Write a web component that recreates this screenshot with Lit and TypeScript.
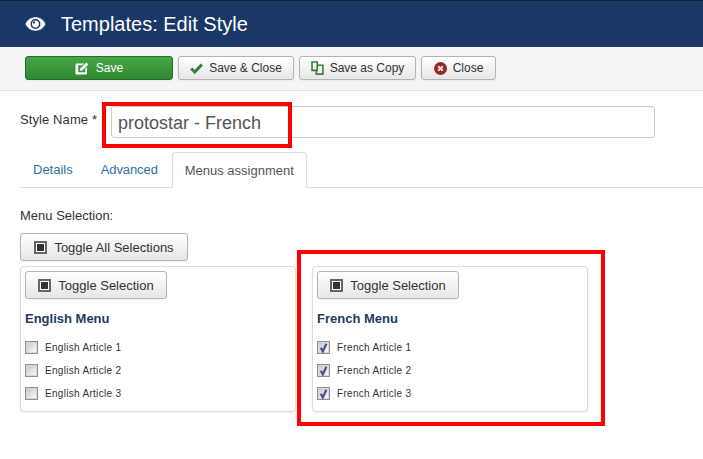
import { LitElement, html, css, svg } from "lit";
import { customElement } from "lit/decorators.js";

const eye = html`<svg class="eye" viewBox="0 0 22 14" width="21" height="14"><path fill="#fff" fill-rule="evenodd" d="M11 0C6.400 0 2.600 2.600.5 7c2.100 4.400 5.900 7 10.500 7s8.400-2.600 10.500-7C19.400 2.600 15.600 0 11 0zm0 1.800a5.200 5.200 0 1 1 0 10.400 5.200 5.200 0 0 1 0-10.400z"/><circle cx="11" cy="7" r="3.600" fill="#fff"/><circle cx="9.500" cy="5.500" r="1.200" fill="#1a3867"/></svg>`;
const editIcon = html`<svg class="ic" viewBox="0 0 14 13" width="14" height="13"><path fill="#fff" d="M1.500 1.500H9L7.200 3.300H3.200v7h7V7l1.800-1.800v6.300a1 1 0 0 1-1 1H1.500a1 1 0 0 1-1-1v-9a1 1 0 0 1 1-1z"/><path fill="#fff" d="M11.300.5l2 2-6 6-2.600.600.600-2.600z"/></svg>`;
const checkIcon = html`<svg class="ic" viewBox="0 0 13 11" width="13" height="11"><path fill="none" stroke="#378137" stroke-width="3" d="M1.200 5.500l3.600 3.500 7-7.500"/></svg>`;
const copyIcon = html`<svg class="ic" viewBox="0 0 13 14" width="13" height="14"><path fill="none" stroke="#378137" stroke-width="1.600" d="M1 1h5.200v8.400H1zM6.200 4.300h2.300l3.400 0v8.800H5.300V9.400"/></svg>`;
const closeIcon = html`<svg class="ic" viewBox="0 0 13 13" width="13" height="13"><circle cx="6.500" cy="6.500" r="6.500" fill="#942a25"/><path stroke="#f3dcdc" stroke-width="2" d="M4.200 4.200l4.600 4.600M8.800 4.200l-4.600 4.600"/></svg>`;
const toggleIcon = html`<span class="toggle"><span></span></span>`;
const tick = svg`<path fill="none" stroke="#3f539c" stroke-width="2.200" d="M3.800 6.800l2 3.600 3.600-7.600"/>`;

const menus = [
  { title: "English Menu", prefix: "English", checked: false },
  { title: "French Menu", prefix: "French", checked: true },
];

@customElement("app-root")
export class AppRoot extends LitElement {
  static styles = css`
    :host {
      display: block;
      position: relative;
      width: 703px;
      height: 459px;
      overflow: hidden;
      background: #fff;
      font-family: "Liberation Sans", Arial, sans-serif;
      font-size: 13px;
      color: #333;
    }
    .head {
      box-sizing: border-box;
      height: 47px;
      border-top: 1px solid #0f2140;
      background: #1a3867;
      display: flex;
      align-items: center;
      padding-left: 25px;
      gap: 15px;
      color: #fff;
      font-size: 20px;
    }
    .eye { display: block; }
    .toolbar {
      box-sizing: border-box;
      height: 44px;
      background: #f5f5f5;
      border-bottom: 1px solid #e3e3e3;
      display: flex;
      gap: 5px;
      padding: 9px 0 0 25px;
    }
    .btn {
      box-sizing: border-box;
      height: 24px;
      display: flex;
      align-items: center;
      justify-content: center;
      gap: 6px;
      font: 12px "Liberation Sans", Arial, sans-serif;
      color: #333;
      border: 1px solid #b3b3b3;
      border-radius: 3px;
      background: linear-gradient(#fff, #e6e6e6);
      box-shadow: 0 1px 2px rgba(0, 0, 0, 0.05);
      padding: 0;
    }
    .ic { display: block; flex: none; }
    .save {
      width: 148px;
      color: #fff;
      gap: 7px;
      border-color: #2a6a2a;
      background: linear-gradient(#46a546, #2f8a2f);
    }
    .w116 { width: 116px; }
    .w117 { width: 117px; }
    .w75 { width: 75px; }
    .name {
      display: flex;
      align-items: flex-start;
      padding: 15px 0 0 20px;
    }
    .name label {
      width: 91px;
      font-size: 13px;
      letter-spacing: 0.1px;
      margin-top: 7px;
      line-height: 14px;
    }
    .name .input {
      box-sizing: border-box;
      width: 544px;
      height: 32px;
      border: 1px solid #ccc;
      border-radius: 3px;
      font-size: 18px;
      line-height: 32px;
      padding-left: 6px;
      color: #555;
    }
    .tabs {
      display: flex;
      align-items: flex-end;
      height: 36px;
      margin: 14px 0 0 20px;
      border-bottom: 1px solid #ddd;
      box-sizing: border-box;
    }
    .tab {
      color: #3071a9;
      padding: 0 15px 0 13px;
      line-height: 35px;
      height: 35px;
    }
    .tab.adv {
      padding-right: 14px;
      letter-spacing: -0.1px;
    }
    .tab.active {
      box-sizing: border-box;
      width: 135px;
      height: 36px;
      margin-bottom: -1px;
      padding: 0;
      text-align: center;
      color: #555;
      border: 1px solid #ddd;
      border-bottom-color: #fff;
      border-radius: 4px 4px 0 0;
      background: #fff;
    }
    .sel-label {
      margin: 21px 0 0 20px;
      line-height: 14px;
    }
    .toggle {
      box-sizing: border-box;
      width: 13px;
      height: 13px;
      border: 2px solid #666;
      background: #fff;
      display: flex;
      align-items: center;
      justify-content: center;
      flex: none;
    }
    .toggle span { width: 7px; height: 7px; background: #333; display: block; }
    .tbtn {
      height: 28px;
      font-size: 13px;
      gap: 7px;
    }
    .all { width: 168px; margin: 10px 0 0 20px; }
    .one { width: 142px; }
    .panels {
      display: flex;
      gap: 16px;
      margin: 5px 0 0 20px;
    }
    .panel {
      box-sizing: border-box;
      width: 276px;
      height: 146px;
      padding: 4px;
      border: 1px solid #ddd;
      border-radius: 4px;
      box-shadow: 0 1px 2px rgba(0, 0, 0, 0.08);
      background: #fff;
    }
    .panel h3 {
      margin: 13px 0 10px;
      font-size: 13px;
      font-weight: bold;
      line-height: 14px;
      color: #243a63;
    }
    .row {
      display: flex;
      align-items: center;
      gap: 7px;
      height: 23px;
      font-size: 10px;
      letter-spacing: 0.3px;
    }
    .row svg { display: block; flex: none; }
    .mark {
      position: absolute;
      box-sizing: border-box;
      border: 4px solid #f00;
      pointer-events: none;
    }
    .m1 { left: 102px; top: 102px; width: 190px; height: 46px; }
    .m2 { left: 297px; top: 250px; width: 308px; height: 176px; }
  `;

  private checkbox(on: boolean) {
    return html`<svg width="13" height="13" viewBox="0 0 13 13">
      <defs>
        <linearGradient id="g" x1="0" y1="0" x2="1" y2="1">
          <stop offset="0" stop-color="#c9c9c9" />
          <stop offset="1" stop-color="#f8f8f8" />
        </linearGradient>
      </defs>
      <rect x=".5" y=".5" width="12" height="12" fill="#d8d8d8" stroke="#8e8f8f" />
      <rect x="2" y="2" width="9" height="9" fill="url(#g)" />
      ${on ? tick : ""}
    </svg>`;
  }

  render() {
    return html`
      <div class="head">${eye}<span>Templates: Edit Style</span></div>
      <div class="toolbar">
        <button class="btn save">${editIcon}<span>Save</span></button>
        <button class="btn w116">${checkIcon}<span>Save &amp; Close</span></button>
        <button class="btn w117">${copyIcon}<span>Save as Copy</span></button>
        <button class="btn w75">${closeIcon}<span>Close</span></button>
      </div>
      <div class="name">
        <label>Style Name *</label>
        <div class="input">protostar - French</div>
      </div>
      <div class="tabs">
        <div class="tab">Details</div>
        <div class="tab adv">Advanced</div>
        <div class="tab active">Menus assignment</div>
      </div>
      <div class="sel-label">Menu Selection:</div>
      <button class="btn tbtn all">${toggleIcon}<span>Toggle All Selections</span></button>
      <div class="panels">
        ${menus.map(
          (m) => html`<div class="panel">
            <button class="btn tbtn one">${toggleIcon}<span>Toggle Selection</span></button>
            <h3>${m.title}</h3>
            ${[1, 2, 3].map(
              (n) => html`<div class="row">${this.checkbox(m.checked)}<span>${m.prefix} Article ${n}</span></div>`
            )}
          </div>`
        )}
      </div>
      <div class="mark m1"></div>
      <div class="mark m2"></div>
    `;
  }
}
